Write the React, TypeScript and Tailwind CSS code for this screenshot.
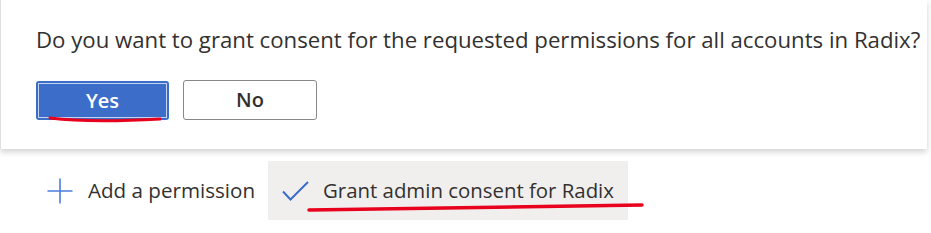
import React from "react";

export default function App() {
  return (
    <div
      className="relative w-[931px] h-[233px] bg-white overflow-hidden text-[#323130]"
      style={{ fontFamily: '"Open Sans", "Noto Sans", sans-serif' }}
    >
      {/* consent dialog */}
      <div className="w-[927px] h-[149px] bg-white border-l border-[#e1dfdd] shadow-[0_3px_6px_rgba(0,0,0,0.18)] pl-[35px] pt-[25px]">
        <p className="text-[22.2px] leading-[30px] whitespace-nowrap">
          Do you want to grant consent for the requested permissions for all accounts in Radix?
        </p>
        <div className="flex gap-[14px] mt-[26px]">
          <button className="w-[133px] h-[39px] rounded-[3px] bg-[#3b6dc9] p-[2px]">
            <span className="flex w-full h-full items-center justify-center border border-[#c4d3ef] text-white text-[20px] font-semibold">
              Yes
            </span>
          </button>
          <button className="w-[134px] h-[40px] -mt-px rounded-[3px] border border-[#8a8886] bg-white text-[20px] font-semibold text-[#323130]">
            No
          </button>
        </div>
      </div>

      {/* command bar */}
      <div className="flex items-center mt-[12px] h-[59px]">
        <button className="flex items-center h-full w-[268px] pl-[47px] gap-[15px] whitespace-nowrap">
          <svg width="26" height="26" viewBox="0 0 26 26" fill="none" stroke="#4a7fe0" strokeWidth="1.6">
            <path d="M13 0.5v25M0.5 13h25" />
          </svg>
          <span className="text-[20.6px]">Add a permission</span>
        </button>
        <button className="flex items-center h-full w-[360px] bg-[#f0efee] pl-[14px] gap-[14px] whitespace-nowrap">
          <svg width="27" height="20" viewBox="0 0 27 20" fill="none" stroke="#3b6dc9" strokeWidth="2">
            <path d="M1 10.5l7.5 8L26 1" />
          </svg>
          <span className="text-[20.4px]">Grant admin consent for Radix</span>
        </button>
      </div>

      {/* red annotation strokes */}
      <svg className="absolute left-0 top-0 pointer-events-none" width="931" height="233">
        <path d="M50 118 Q90 123 160 119" stroke="#e8001c" strokeWidth="3" fill="none" strokeLinecap="round" />
        <path d="M309 210 Q480 207 642 205" stroke="#e8001c" strokeWidth="3.5" fill="none" strokeLinecap="round" />
      </svg>
    </div>
  );
}
